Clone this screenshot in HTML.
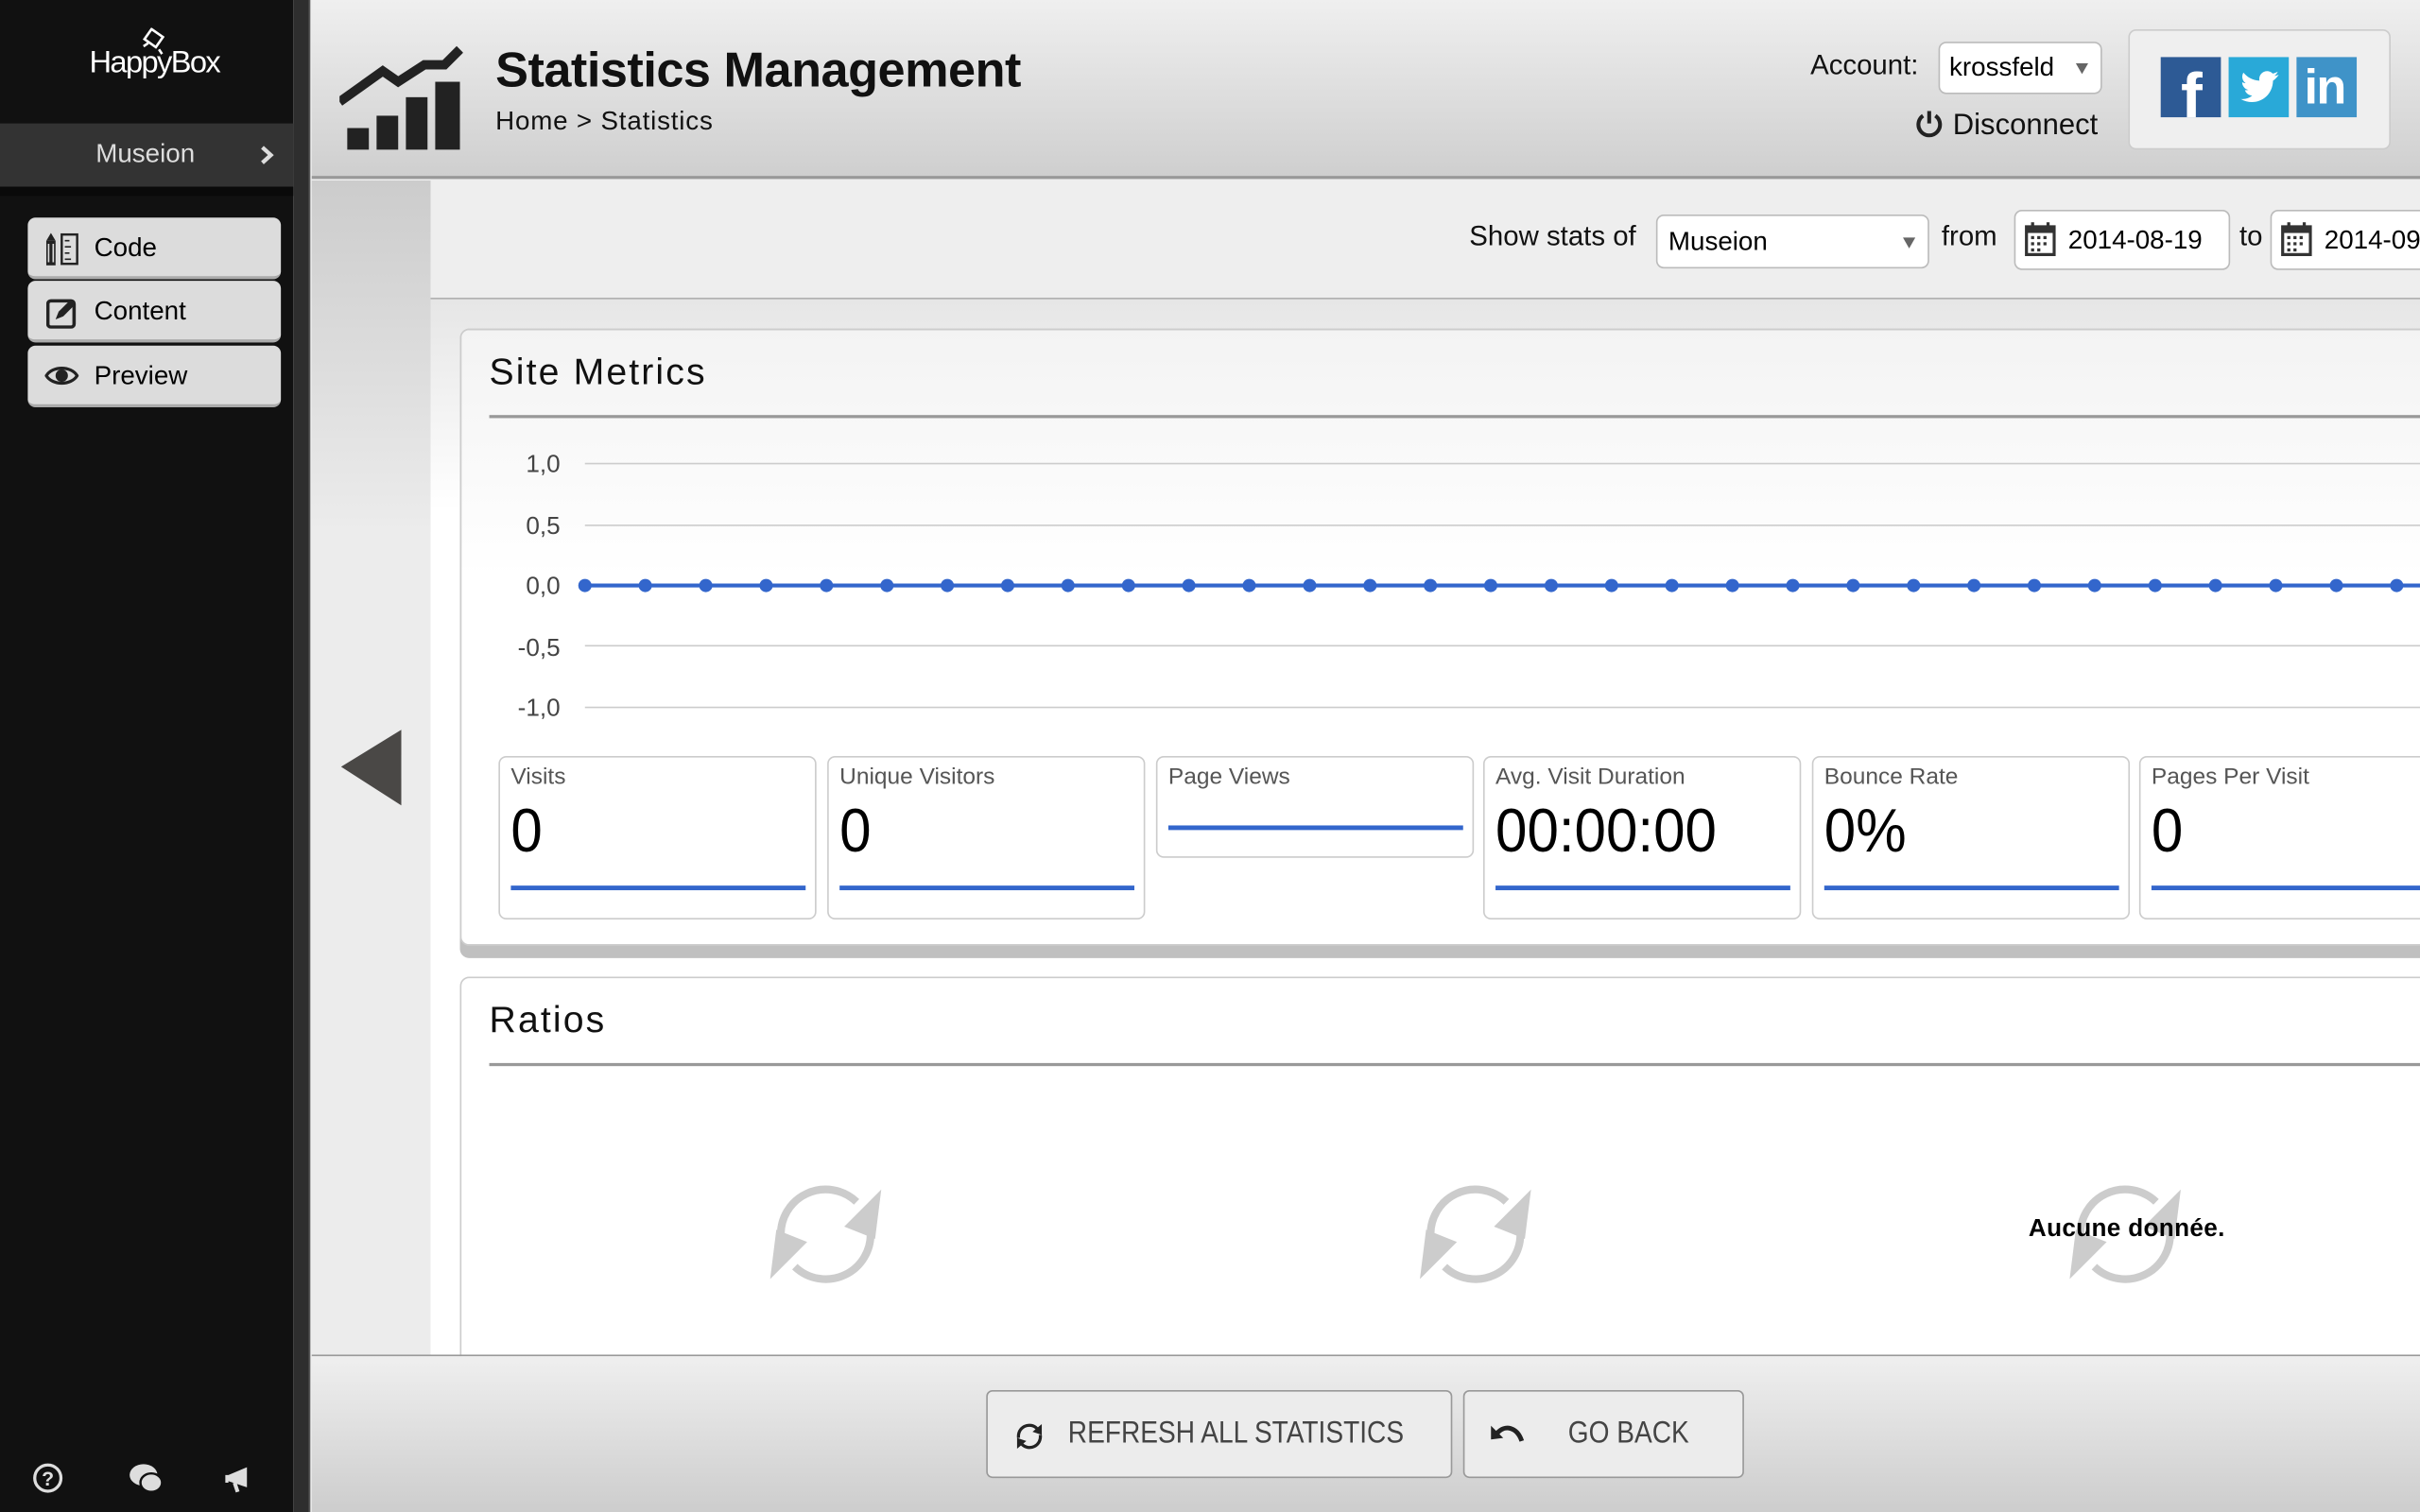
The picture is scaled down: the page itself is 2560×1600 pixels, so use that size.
<!DOCTYPE html>
<html><head><meta charset="utf-8"><style>
*{margin:0;padding:0;box-sizing:border-box}
html,body{width:2560px;height:1600px;overflow:hidden;background:#111}
#s{position:absolute;left:0;top:0;width:1568px;height:980px;transform:scale(1.632653);transform-origin:0 0;font-family:"Liberation Sans",sans-serif;overflow:hidden;background:#eee}
.a{position:absolute}
.side{left:0;top:0;width:190px;height:980px;background:#111}
.strip{left:190px;top:0;width:11px;height:980px;background:#2e2e2e;border-right:1px solid #555}
.btn{left:18px;width:164px;height:40px;background:#dcdcdc;border-radius:5px;border-bottom:2px solid #aaa;font-size:17px;color:#000;line-height:40px;padding-left:43px}
.hdr{left:202px;top:0;width:1366px;height:116px;background:linear-gradient(#efefef,#cfcfcf);border-bottom:2px solid #999}
.sel{background:#fff;border:1px solid #bbb;border-radius:5px;font-size:17px;color:#000}
.tri{position:absolute;right:8px;top:50%;margin-top:-3px;border-left:4px solid transparent;border-right:4px solid transparent;border-top:7px solid #666}
.card{width:206px;height:106px;border:1.5px solid #ccc;border-radius:5px;background:#fff}
.card .l{position:absolute;left:7px;top:4px;font-size:15px;color:#555}
.card .v{position:absolute;left:7px;top:26px;font-size:40px;color:#000;letter-spacing:0px;transform:scaleX(0.92);transform-origin:0 0;white-space:nowrap}
.card .b{position:absolute;left:7px;right:6px;top:83px;height:3px;background:#3366cc}
.fb{height:57px;top:901px;background:#ececec;border:1.5px solid #999;border-radius:4px;font-size:20px;color:#444;line-height:54px;white-space:nowrap}
.fb span{display:inline-block;transform:scaleX(0.86);transform-origin:0 50%}
</style></head><body><div id="s">
<div class="a side"></div>
<div class="a strip"></div>
<div class="a" style="left:0;top:18px;width:200px;text-align:center;color:#fff;font-size:20px;letter-spacing:-1px">
<svg width="22" height="18" viewBox="0 0 22 18" style="display:block;margin:0 auto -6px"><g fill="none" stroke="#fff" stroke-width="1.6"><rect x="6" y="3" width="9" height="8" transform="rotate(35 11 7)"/><path d="M4 12l3-2M14 14l2 3"/></g></svg>HappyBox</div>
<div class="a" style="left:0;top:80px;width:190px;height:41px;background:#333;color:#ddd;font-size:17px;line-height:40px;padding-left:62px">Museion<svg class="a" style="left:168px;top:14px" width="10" height="13" viewBox="0 0 10 13"><path d="M2 1.500L7.500 6.500 2 11.500" fill="none" stroke="#ddd" stroke-width="2.6"/></svg></div>
<div class="a" style="left:0;top:121px;width:190px;height:6px;background:#0a0a0a"></div>
<div class="a btn" style="top:141px"><svg class="a" style="left:11px;top:10px" width="22" height="21" viewBox="0 0 22 21"><path d="M1 5h6v16H1z" fill="#222"/><path d="M4 0l3 5H1z" fill="#222"/><path d="M2.500 7v12M5.500 7v12" stroke="#ddd"/><rect x="11" y="1" width="10" height="19" fill="none" stroke="#222" stroke-width="1.500"/><path d="M13 5h3M13 9h4M13 13h3M13 17h4" stroke="#222"/></svg>Code</div>
<div class="a btn" style="top:182px"><svg class="a" style="left:12px;top:10px" width="21" height="21" viewBox="0 0 21 21"><rect x="1" y="3" width="17" height="17" rx="2" fill="none" stroke="#222" stroke-width="2.200"/><path d="M6 15l2-5 8-8 3 3-8 8z" fill="#222"/></svg>Content</div>
<div class="a btn" style="top:224px"><svg class="a" style="left:11px;top:12px" width="22" height="15" viewBox="0 0 22 15"><path d="M1 7.500C5 1 17 1 21 7.500 17 14 5 14 1 7.500z" fill="none" stroke="#222" stroke-width="2"/><circle cx="11" cy="7.500" r="4" fill="#222"/></svg>Preview</div>
<svg class="a" style="left:20px;top:947px" width="150" height="24" viewBox="0 0 150 24"><circle cx="11" cy="11" r="8.500" fill="none" stroke="#ddd" stroke-width="2"/><text x="11" y="16" font-size="13" font-weight="bold" fill="#ddd" text-anchor="middle" font-family="Liberation Sans">?</text><ellipse cx="73" cy="9" rx="9" ry="7" fill="#ddd"/><ellipse cx="78" cy="14" rx="7" ry="6" fill="#ddd" stroke="#111" stroke-width="1.500"/><path d="M128 9l12-5v13l-12-4z M128 9h-2v5h2z" fill="#ddd"/><path d="M132 14l2 6" stroke="#ddd" stroke-width="2.500"/></svg>

<div class="a hdr"></div>
<svg class="a" style="left:220px;top:26px" width="80" height="72" viewBox="0 0 80 72"><path d="M0 40L28 20L38 27L55 16H68L78 6" fill="none" stroke="#222" stroke-width="6"/><rect x="5" y="57" width="14" height="14" fill="#222"/><rect x="24" y="49" width="14" height="22" fill="#222"/><rect x="43" y="37" width="14" height="34" fill="#222"/><rect x="62" y="27" width="16" height="44" fill="#222"/></svg>
<div class="a" style="left:321px;top:27px;font-size:32px;font-weight:bold;color:#111;letter-spacing:-0.300px">Statistics Management</div>
<div class="a" style="left:321px;top:69px;font-size:17px;color:#111;letter-spacing:0.500px">Home &gt; Statistics</div>
<div class="a" style="left:1173px;top:32px;font-size:18px;color:#111">Account:</div>
<div class="a sel" style="left:1256px;top:27px;width:106px;height:34px;line-height:32px;padding-left:6px">krossfeld<span class="tri"></span></div>
<div class="a" style="left:1240px;top:70px;font-size:19px;color:#111"><svg width="20" height="20" viewBox="0 0 20 20" style="vertical-align:-3px"><path d="M6 5a7 7 0 1 0 8 0" fill="none" stroke="#222" stroke-width="2.500"/><path d="M10 2v8" stroke="#222" stroke-width="2.500"/></svg> Disconnect</div>
<div class="a" style="left:1379px;top:19px;width:170px;height:78px;background:#efefef;border:1px solid #ccc;border-radius:5px"></div>
<div class="a" style="left:1400px;top:37px;width:39px;height:39px;background:#2d5a95;overflow:hidden"><span class="a" style="left:13px;top:2px;color:#fff;font-size:42px;font-weight:bold">f</span></div>
<div class="a" style="left:1444px;top:37px;width:39px;height:39px;background:#29a9d8"><svg width="39" height="39" viewBox="0 0 24 24"><path d="M20 7c-.6.3-1.200.4-1.800.5.7-.4 1.100-1 1.400-1.700-.6.4-1.300.6-2 .8a3.100 3.100 0 0 0-5.300 2.800C9.700 9.300 7.500 8.100 5.900 6.200c-.9 1.500-.4 3.300.9 4.200-.5 0-1-.2-1.400-.4 0 1.500 1.100 2.800 2.500 3.100-.5.100-.9.200-1.400.100.4 1.300 1.600 2.100 2.900 2.200A6.300 6.300 0 0 1 4.800 16.700c5.800 3.300 12.700-.3 12.900-7.300.9-.6 1.600-1.300 2.300-2.400z" fill="#fff"/></svg></div>
<div class="a" style="left:1488px;top:37px;width:39px;height:39px;background:#3f93c8"><span class="a" style="left:5px;top:1px;color:#fff;font-size:32px;font-weight:bold;letter-spacing:-1px">in</span></div>

<div class="a" style="left:202px;top:117px;width:77px;height:762px;background:linear-gradient(#ccc,#ececec 30%,#ececec)"></div>
<svg class="a" style="left:220px;top:472px" width="42" height="52"><path d="M1 25L40 1V50z" fill="#4a4846"/></svg>
<div class="a" style="left:279px;top:117px;width:1289px;height:77px;background:#eee;border-bottom:1.500px solid #aaa"></div>
<div class="a" style="left:279px;top:194px;width:1289px;height:685px;background:linear-gradient(#e6e6e6,#fff 20%,#fff)"></div>
<div class="a" style="left:952px;top:143px;font-size:18px;color:#111">Show stats of</div>
<div class="a sel" style="left:1073px;top:139px;width:177px;height:35px;line-height:33px;padding-left:7px">Museion<span class="tri"></span></div>
<div class="a" style="left:1258px;top:143px;font-size:18px;color:#111">from</div>
<div class="a sel" style="left:1305px;top:136px;width:140px;height:39px;line-height:37px;padding-left:34px">2014-08-19</div>
<div class="a" style="left:1451px;top:143px;font-size:18px;color:#111">to</div>
<div class="a sel" style="left:1471px;top:136px;width:140px;height:39px;line-height:37px;padding-left:34px">2014-09-18</div>
<svg class="a" style="left:1312px;top:144px" width="20" height="22" viewBox="0 0 20 22"><rect x="1" y="3" width="18" height="18" fill="none" stroke="#333" stroke-width="2"/><rect x="1" y="3" width="18" height="4" fill="#333"/><path d="M5 0v5M15 0v5" stroke="#333" stroke-width="2"/><g fill="#333"><rect x="4" y="9" width="2" height="2"/><rect x="8" y="9" width="2" height="2"/><rect x="12" y="9" width="2" height="2"/><rect x="4" y="13" width="2" height="2"/><rect x="8" y="13" width="2" height="2"/><rect x="12" y="13" width="2" height="2"/><rect x="4" y="17" width="2" height="2"/><rect x="8" y="17" width="2" height="2"/></g></svg>
<svg class="a" style="left:1478px;top:144px" width="20" height="22" viewBox="0 0 20 22"><rect x="1" y="3" width="18" height="18" fill="none" stroke="#333" stroke-width="2"/><rect x="1" y="3" width="18" height="4" fill="#333"/><path d="M5 0v5M15 0v5" stroke="#333" stroke-width="2"/><g fill="#333"><rect x="4" y="9" width="2" height="2"/><rect x="8" y="9" width="2" height="2"/><rect x="12" y="9" width="2" height="2"/><rect x="4" y="13" width="2" height="2"/><rect x="8" y="13" width="2" height="2"/><rect x="12" y="13" width="2" height="2"/><rect x="4" y="17" width="2" height="2"/><rect x="8" y="17" width="2" height="2"/></g></svg>

<div class="a" style="left:298px;top:213px;width:1290px;height:408px;background:#c0c0c0;border-radius:6px"></div>
<div class="a" style="left:298px;top:213px;width:1290px;height:400px;background:linear-gradient(#f3f3f3,#fff 40%);border:1px solid #ccc;border-radius:6px"></div>
<div class="a" style="left:317px;top:228px;font-size:24px;color:#111;letter-spacing:1.300px">Site Metrics</div>
<div class="a" style="left:317px;top:269px;width:1260px;height:1.500px;background:#999"></div>
<svg class="a" style="left:320px;top:285px" width="1248" height="190" font-family="Liberation Sans" font-size="16" fill="#444">
<g stroke="#ccc"><path d="M59 15.500H1248M59 55.500H1248M59 133.500H1248M59 173.500H1248"/></g>
<g text-anchor="end"><text x="43" y="21">1,0</text><text x="43" y="61">0,5</text><text x="43" y="100">0,0</text><text x="43" y="140">-0,5</text><text x="43" y="179">-1,0</text></g>
<path d="M59 94.500H1248" stroke="#3366cc" stroke-width="2.500"/>
<g fill="#3366cc">
<circle cx="59" cy="94.500" r="4.300"/><circle cx="98.100" cy="94.500" r="4.300"/><circle cx="137.300" cy="94.500" r="4.300"/><circle cx="176.400" cy="94.500" r="4.300"/><circle cx="215.500" cy="94.500" r="4.300"/><circle cx="254.700" cy="94.500" r="4.300"/><circle cx="293.800" cy="94.500" r="4.300"/><circle cx="332.900" cy="94.500" r="4.300"/><circle cx="372" cy="94.500" r="4.300"/><circle cx="411.200" cy="94.500" r="4.300"/><circle cx="450.300" cy="94.500" r="4.300"/><circle cx="489.400" cy="94.500" r="4.300"/><circle cx="528.600" cy="94.500" r="4.300"/><circle cx="567.700" cy="94.500" r="4.300"/><circle cx="606.800" cy="94.500" r="4.300"/><circle cx="645.900" cy="94.500" r="4.300"/><circle cx="685.100" cy="94.500" r="4.300"/><circle cx="724.200" cy="94.500" r="4.300"/><circle cx="763.300" cy="94.500" r="4.300"/><circle cx="802.500" cy="94.500" r="4.300"/><circle cx="841.600" cy="94.500" r="4.300"/><circle cx="880.700" cy="94.500" r="4.300"/><circle cx="919.900" cy="94.500" r="4.300"/><circle cx="959" cy="94.500" r="4.300"/><circle cx="998.100" cy="94.500" r="4.300"/><circle cx="1037.200" cy="94.500" r="4.300"/><circle cx="1076.400" cy="94.500" r="4.300"/><circle cx="1115.500" cy="94.500" r="4.300"/><circle cx="1154.600" cy="94.500" r="4.300"/><circle cx="1193.800" cy="94.500" r="4.300"/><circle cx="1232.900" cy="94.500" r="4.300"/></g></svg>
<div class="a card" style="left:323px;top:490px"><span class="l">Visits</span><span class="v">0</span><span class="b"></span></div>
<div class="a card" style="left:536px;top:490px"><span class="l">Unique Visitors</span><span class="v">0</span><span class="b"></span></div>
<div class="a card" style="left:749px;top:490px;height:66px"><span class="l">Page Views</span><span class="b" style="top:44px"></span></div>
<div class="a card" style="left:961px;top:490px"><span class="l">Avg. Visit Duration</span><span class="v">00:00:00</span><span class="b"></span></div>
<div class="a card" style="left:1174px;top:490px"><span class="l">Bounce Rate</span><span class="v">0%</span><span class="b"></span></div>
<div class="a card" style="left:1386px;top:490px"><span class="l">Pages Per Visit</span><span class="v">0</span><span class="b"></span></div>

<div class="a" style="left:298px;top:633px;width:1290px;height:260px;background:#fff;border:1px solid #ccc;border-radius:6px"></div>
<div class="a" style="left:317px;top:648px;font-size:24px;color:#111;letter-spacing:1.300px">Ratios</div>
<div class="a" style="left:317px;top:689px;width:1260px;height:1.500px;background:#999"></div>
<svg class="a" style="left:495px;top:760px" width="80" height="80" viewBox="-40 -40 80 80"><g fill="none" stroke="#ccc" stroke-width="5"><path d="M-29 2A29 29 0 0 1 20-21"/><path d="M29-2A29 29 0 0 1-20 21"/></g><g fill="#ccc"><path d="M36-29L32 3 12-5z"/><path d="M-36 29L-32-3-12 5z"/></g></svg>
<svg class="a" style="left:916px;top:760px" width="80" height="80" viewBox="-40 -40 80 80"><g fill="none" stroke="#ccc" stroke-width="5"><path d="M-29 2A29 29 0 0 1 20-21"/><path d="M29-2A29 29 0 0 1-20 21"/></g><g fill="#ccc"><path d="M36-29L32 3 12-5z"/><path d="M-36 29L-32-3-12 5z"/></g></svg>
<svg class="a" style="left:1337px;top:760px" width="80" height="80" viewBox="-40 -40 80 80"><g fill="none" stroke="#ccc" stroke-width="5"><path d="M-29 2A29 29 0 0 1 20-21"/><path d="M29-2A29 29 0 0 1-20 21"/></g><g fill="#ccc"><path d="M36-29L32 3 12-5z"/><path d="M-36 29L-32-3-12 5z"/></g></svg>
<div class="a" style="left:1278px;top:788px;width:200px;text-align:center;font-size:16px;font-weight:bold;color:#000;letter-spacing:0.200px">Aucune donnée.</div>

<div class="a" style="left:202px;top:878px;width:1366px;height:102px;background:linear-gradient(#efefef,#cdcdcd);border-top:1.500px solid #999"></div>
<div class="a fb" style="left:639px;width:302px;padding-left:52px"><svg class="a" style="left:17px;top:19px" width="20" height="20" viewBox="-10 -10 20 20"><g fill="none" stroke="#222" stroke-width="2"><path d="M-7 1A7 7 0 0 1 5-5"/><path d="M7-1A7 7 0 0 1-5 5"/></g><path d="M8-8L8-1 2-3z M-8 8L-8 1-2 3z" fill="#222"/></svg><span>REFRESH ALL STATISTICS</span></div>
<div class="a fb" style="left:948px;width:182px;padding-left:67px"><svg class="a" style="left:17px;top:20px" width="22" height="16" viewBox="0 0 22 16"><path d="M4 7C9 1 17 3 20 12" fill="none" stroke="#222" stroke-width="3"/><path d="M0 2L8 10 0 11z" fill="#222"/></svg><span>GO BACK</span></div>
</div></body></html>
